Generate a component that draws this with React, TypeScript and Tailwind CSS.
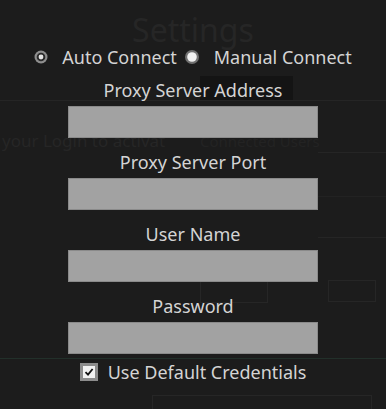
import React from 'react';

const font = { fontFamily: '"Noto Sans", "Open Sans", sans-serif' };

function Radio({ checked }: { checked: boolean }) {
    if (checked) {
        return (
            <svg width="14" height="14" viewBox="0 0 14 14">
                <circle cx="7" cy="7" r="6.5" fill="#8e8e8e" />
                <circle cx="7" cy="7" r="4.3" fill="#2a2a2a" />
                <circle cx="7" cy="7" r="2.4" fill="#e6e6e6" />
            </svg>
        );
    }
    return (
        <svg width="14" height="14" viewBox="0 0 14 14">
            <circle cx="7" cy="7" r="7" fill="#707070" />
            <circle cx="7" cy="7" r="4.8" fill="#f0f0f0" />
        </svg>
    );
}

function Field({ label }: { label: string }) {
    return (
        <div className="flex flex-col items-center">
            <div className="h-6 leading-6 text-[18px] text-[#d4d4d4]">{label}</div>
            <div className="mt-1 h-8 w-[250px] bg-[#a2a2a2] border border-[#8a8a8a]" />
        </div>
    );
}

export default function App() {
    return (
        <div className="relative w-[386px] h-[409px] overflow-hidden bg-[#1c1c1c]" style={font}>
            {/* faded page behind the overlay */}
            <div className="absolute inset-0 pointer-events-none">
                <div className="absolute left-0 right-0 top-[6px] text-center text-[32px] text-[#262626]">Settings</div>
                <div className="absolute left-[200px] top-[76px] w-[93px] h-[25px] bg-[#141414]" />
                <div className="absolute left-0 right-0 top-[100px] h-px bg-[#252525]" />
                <div className="absolute left-[2px] top-[128px] text-[17px] text-[#262626]">your Login to activat</div>
                <div className="absolute left-[200px] top-[130px] text-[15px] text-[#232323]">Connected Users</div>
                <div className="absolute left-[318px] top-[152px] right-0 h-px bg-[#252525]" />
                <div className="absolute left-[318px] top-[237px] right-0 h-px bg-[#252525]" />
                <div className="absolute left-[318px] top-[196px] right-0 h-px bg-[#222222]" />
                <div className="absolute left-[200px] top-[281px] w-[68px] h-[22px] border border-[#262626]" />
                <div className="absolute left-[328px] top-[280px] w-[48px] h-[22px] border border-[#262626]" />
                <div className="absolute left-[200px] top-[334px] w-[118px] h-[20px] bg-[#262626]" />
                <div className="absolute left-0 right-0 top-[358px] h-px bg-[#22302a]" />
                <div className="absolute left-[152px] top-[395px] w-[220px] h-[20px] border border-[#262626]" />
            </div>

            <div className="relative flex flex-col items-center pt-[45px]">
                <div className="flex items-center h-6 text-[18px] text-[#d4d4d4]">
                    <Radio checked />
                    <span className="ml-[14px]">Auto Connect</span>
                    <span className="ml-[8px] flex items-center"><Radio checked={false} /></span>
                    <span className="ml-[15px]">Manual Connect</span>
                </div>
                <div className="mt-[9px] flex flex-col items-center gap-[12px]">
                    <Field label="Proxy Server Address" />
                    <Field label="Proxy Server Port" />
                    <Field label="User Name" />
                    <Field label="Password" />
                </div>
                <div className="mt-[6px] flex items-center h-6 text-[18px] text-[#d4d4d4]">
                    <svg width="18" height="18" viewBox="0 0 18 18">
                        <rect x="0" y="0" width="18" height="18" fill="#8c8c8c" />
                        <rect x="3" y="3" width="12" height="12" fill="#f2f2f2" />
                        <path d="M5.5 9.2 L8 11.6 L12.6 6" fill="none" stroke="#111" strokeWidth="1.8" />
                    </svg>
                    <span className="ml-[10px]">Use Default Credentials</span>
                </div>
            </div>
        </div>
    );
}
